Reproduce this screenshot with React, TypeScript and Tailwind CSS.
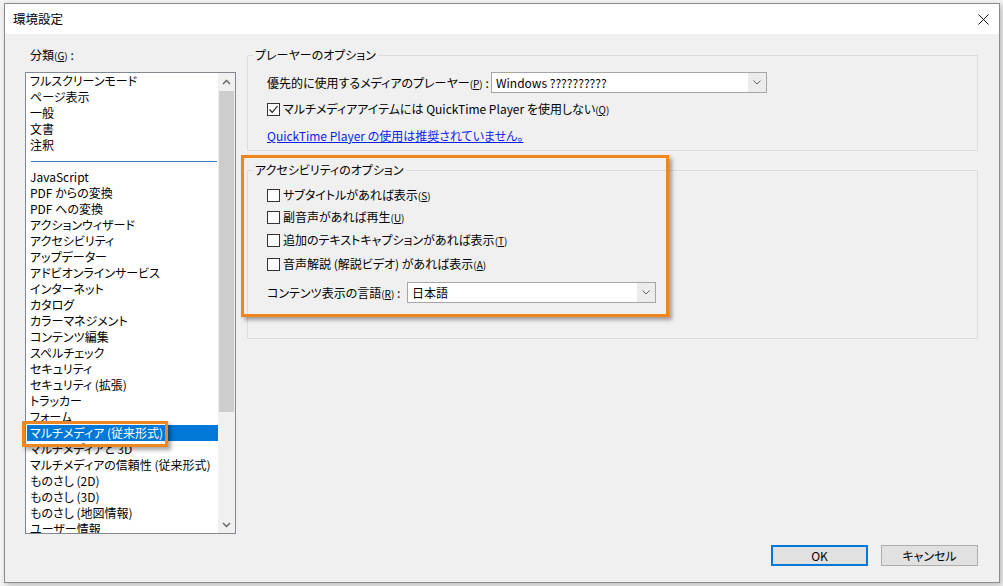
import React from 'react';

const topItems = ['フルスクリーンモード', 'ページ表示', '一般', '文書', '注釈'];

const mainItems = [
  'JavaScript',
  'PDF からの変換',
  'PDF への変換',
  'アクションウィザード',
  'アクセシビリティ',
  'アップデーター',
  'アドビオンラインサービス',
  'インターネット',
  'カタログ',
  'カラーマネジメント',
  'コンテンツ編集',
  'スペルチェック',
  'セキュリティ',
  'セキュリティ (拡張)',
  'トラッカー',
  'フォーム',
  'マルチメディア (従来形式)',
  'マルチメディアと 3D',
  'マルチメディアの信頼性 (従来形式)',
  'ものさし (2D)',
  'ものさし (3D)',
  'ものさし (地図情報)',
  'ユーザー情報',
];

const SELECTED = 'マルチメディア (従来形式)';

// mnemonic key, e.g. (G) with underlined letter
function Key({ k }: { k: string }) {
  return (
    <span className="text-[10px]">
      (<span className="underline">{k}</span>)
    </span>
  );
}

function Chevron({ up = false }: { up?: boolean }) {
  return (
    <svg width="9" height="6" viewBox="0 0 9 6" fill="none" stroke="#606060" strokeWidth="1.3">
      {up ? <path d="M1 5 L4.5 1.5 L8 5" /> : <path d="M1 1 L4.5 4.5 L8 1" />}
    </svg>
  );
}

function Select({ value, width }: { value: string; width: string }) {
  return (
    <div className={`${width} h-[21px] border border-[#a6a6a6] bg-white flex`}>
      <div className="flex-1 pl-[4px] leading-[19px]">{value}</div>
      <div className="w-[18px] bg-[#ececec] flex items-center justify-center">
        <svg width="8" height="5" viewBox="0 0 8 5" fill="none" stroke="#606060" strokeWidth="1">
          <path d="M0.5 0.5 L4 4 L7.5 0.5" />
        </svg>
      </div>
    </div>
  );
}

function Checkbox({ checked = false }: { checked?: boolean }) {
  return (
    <div className="w-[13px] h-[13px] border border-[#333333] bg-white flex items-center justify-center shrink-0">
      {checked && (
        <svg width="11" height="11" viewBox="0 0 11 11" fill="none" stroke="#222" strokeWidth="1.2">
          <path d="M1.5 5.5 L4.2 8.3 L9.5 2.2" />
        </svg>
      )}
    </div>
  );
}

export default function App() {
  return (
    <div className="relative w-[1003px] h-[586px] overflow-hidden bg-[#f4f4f4] pl-[4px] pt-[3px] font-['Noto_Sans_CJK_JP',sans-serif] [font-feature-settings:'palt'] text-[12px] text-black">
      {/* Dialog */}
      <div className="w-[996px] h-[580px] border border-[#8c8c8c] bg-[#f0f0f0] flex flex-col shadow-[2px_2px_6px_rgba(0,0,0,0.25)]">
        {/* Title bar */}
        <div className="h-[30px] bg-white flex items-center justify-between pl-[8px] pr-[10px]">
          <span className="text-[12.5px]">環境設定</span>
          <svg width="11" height="11" viewBox="0 0 11 11" stroke="#111" strokeWidth="1">
            <path d="M0.5 0.5 L10.5 10.5 M10.5 0.5 L0.5 10.5" />
          </svg>
        </div>

        {/* Body */}
        <div className="flex pt-[13px] pl-[20px] gap-[11px]">
          {/* Left column */}
          <div className="w-[211px]">
            <div className="h-[16px] leading-[16px] pl-[5px]">
              分類<Key k="G" /> :
            </div>
            <div className="mt-[9px] h-[462px] border border-[#828790] bg-white flex">
              <div className="flex-1 overflow-hidden">
                {topItems.map((t) => (
                  <div key={t} className="leading-[16px] pl-[4px]">{t}</div>
                ))}
                <div className="h-[16px] flex items-center pl-[5px] pr-[1px]">
                  <div className="h-px w-full bg-[#3d7ab8]" />
                </div>
                {mainItems.map((t) =>
                  t === SELECTED ? (
                    <div key={t} className="leading-[16px] ml-[1px] pl-[3px] bg-[#0078d7] text-white">{t}</div>
                  ) : (
                    <div key={t} className="leading-[16px] pl-[4px] whitespace-nowrap">{t}</div>
                  )
                )}
              </div>
              {/* Scrollbar */}
              <div className="w-[17px] bg-[#f0f0f0] flex flex-col">
                <div className="h-[17px] flex items-center justify-center"><Chevron up /></div>
                <div className="flex-1">
                  <div className="mt-[1px] mx-[1px] h-[321px] bg-[#cdcdcd]" />
                </div>
                <div className="h-[17px] flex items-center justify-center"><Chevron /></div>
              </div>
            </div>
          </div>

          {/* Right column */}
          <div className="w-[731px]">
            <fieldset className="h-[104px] border border-[#dcdcdc] rounded-[1px]">
              <legend className="ml-[5px] px-[2px] leading-[16px]">プレーヤーのオプション</legend>
              <div className="pl-[19px]">
                <div className="mt-[9px] h-[21px] flex items-center">
                  <div className="w-[224px]">
                    優先的に使用するメディアのプレーヤー<Key k="P" /> :
                  </div>
                  <Select value="Windows ??????????" width="w-[276px]" />
                </div>
                <div className="mt-[6px] h-[20px] flex items-center gap-[3px]">
                  <Checkbox checked />
                  <span>
                    マルチメディアアイテムには QuickTime Player を使用しない<Key k="Q" />
                  </span>
                </div>
                <div className="mt-[9px] h-[16px] leading-[16px]">
                  <span className="text-[#0a1ef0] underline">QuickTime Player の使用は推奨されていません。</span>
                </div>
              </div>
            </fieldset>

            <fieldset className="mt-[11px] h-[177px] border border-[#dcdcdc] rounded-[1px]">
              <legend className="ml-[5px] px-[2px] leading-[16px]">アクセシビリティのオプション</legend>
              <div className="pl-[19px]">
                <div className="mt-[7px] h-[20px] flex items-center gap-[3px]">
                  <Checkbox />
                  <span>サブタイトルがあれば表示<Key k="S" /></span>
                </div>
                <div className="mt-[2px] h-[20px] flex items-center gap-[3px]">
                  <Checkbox />
                  <span>副音声があれば再生<Key k="U" /></span>
                </div>
                <div className="mt-[3px] h-[20px] flex items-center gap-[3px]">
                  <Checkbox />
                  <span>追加のテキストキャプションがあれば表示<Key k="T" /></span>
                </div>
                <div className="mt-[4px] h-[20px] flex items-center gap-[3px]">
                  <Checkbox />
                  <span>音声解説 (解説ビデオ) があれば表示<Key k="A" /></span>
                </div>
                <div className="mt-[8px] h-[21px] flex items-center">
                  <div className="w-[140px]">
                    コンテンツ表示の言語<Key k="R" /> :
                  </div>
                  <Select value="日本語" width="w-[249px]" />
                </div>
              </div>
            </fieldset>
          </div>
        </div>

        {/* Footer buttons */}
        <div className="mt-[11px] flex justify-end gap-[13px] pr-[21px]">
          <button className="w-[97px] h-[21px] border-2 border-[#0078d7] bg-[#e1e1e1] leading-[17px]">OK</button>
          <button className="w-[97px] h-[21px] border border-[#adadad] bg-[#e1e1e1] leading-[19px]">キャンセル</button>
        </div>
      </div>

      {/* Orange annotation boxes */}
      <div className="absolute left-[241px] top-[155px] w-[428px] h-[162px] border-[3px] border-[#f0861e] shadow-[3px_3px_4px_rgba(0,0,0,0.35)]" />
      <div className="absolute left-[22px] top-[421px] w-[146px] h-[26px] border-[3px] border-[#f0861e] shadow-[3px_3px_4px_rgba(0,0,0,0.35)]" />
    </div>
  );
}
